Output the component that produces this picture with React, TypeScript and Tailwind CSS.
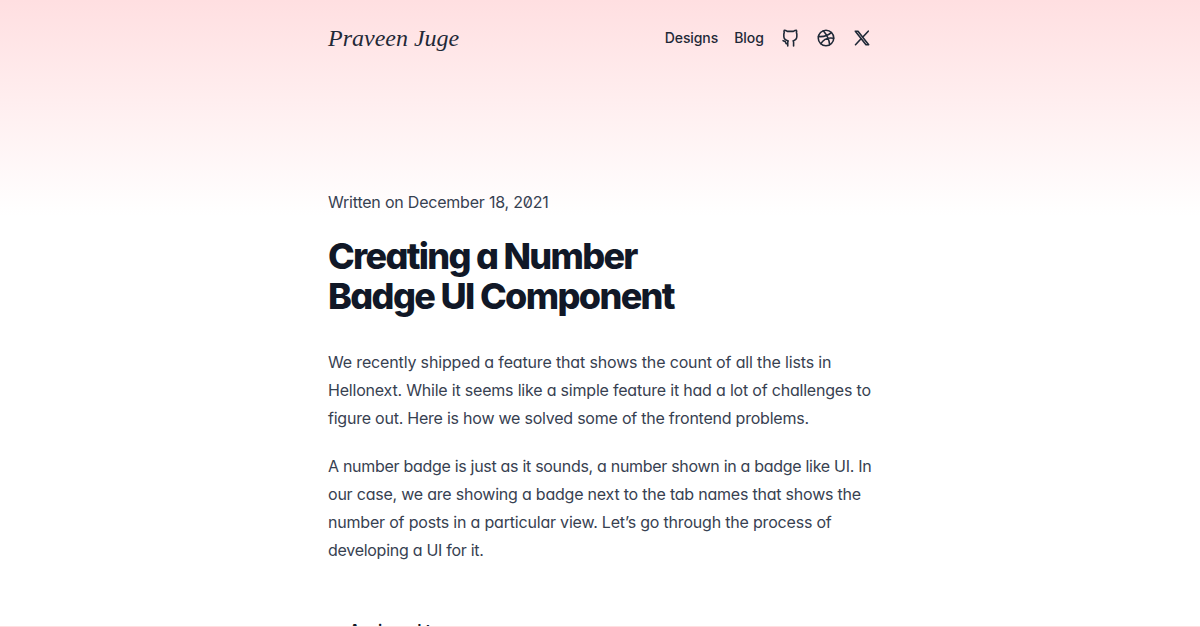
const intro = [
  { text: "We recently shipped a feature that shows the count of all the lists in", track: "tracking-[-0.155px]" },
  { text: "Hellonext. While it seems like a simple feature it had a lot of challenges to", track: "tracking-[-0.2px]" },
  { text: "figure out. Here is how we solved some of the frontend problems.", track: "tracking-[-0.23px]" },
];
const detail = [
  { text: "A number badge is just as it sounds, a number shown in a badge like UI. In", track: "tracking-[-0.3px]" },
  { text: "our case, we are showing a badge next to the tab names that shows the", track: "tracking-[-0.215px]" },
  { text: "number of posts in a particular view. Let’s go through the process of", track: "tracking-[-0.195px]" },
  { text: "developing a UI for it.", track: "tracking-[-0.28px]" },
];

function Paragraph({ lines }: { lines: { text: string; track: string }[] }) {
  return (
    <p className="text-base leading-7 text-[#374151]">
      {lines.map((l) => (
        <span key={l.text} className={`block whitespace-nowrap ${l.track}`}>{l.text}</span>
      ))}
    </p>
  );
}

const iconProps = {
  viewBox: "0 0 24 24",
  fill: "none",
  stroke: "currentColor",
  strokeWidth: 1.9,
  strokeLinecap: "round" as const,
  strokeLinejoin: "round" as const,
  className: "size-5",
};

export default function App() {
  return (
    <div className="flex h-[627px] flex-col overflow-hidden border-b border-[#ffdfe1] bg-linear-to-b from-[#ffdfe1] to-white to-[216px] font-['Inter','Liberation_Sans',sans-serif] [font-feature-settings:'cv11','zero']">
      <div className="mx-auto w-[544px]">
        <header className="flex h-[76px] items-center justify-between text-[#1f2937]">
          <a className="whitespace-nowrap font-['Liberation_Serif',serif] text-[24px] leading-8 italic">Praveen Juge</a>
          <nav className="flex items-center gap-4 text-sm font-medium">
            <a className="tracking-[-0.1px]">Designs</a>
            <a>Blog</a>
            <svg {...iconProps}>
              <path d="M16.300 21.600V17.200c0-.8-.2-1.300-.6-1.700 3.200-1.100 4.500-2.400 4.500-5.300V7.300c0-.6-.2-1-.5-1.500.4-1 .4-2 0-3.200-1.500 0-2.600.6-3.700 1.400H8.800C7.700 3.200 6.600 2.600 5.100 2.600c-.4 1.200-.4 2.200 0 3.200-.3.500-.5.9-.5 1.500v2.900c0 2.900 1.300 4.200 5.300 5.300-.4.400-.6.900-.6 1.700v4.400M9.100 18.800H7.400L6.200 16.200L3.700 15.200" />
            </svg>
            <svg {...iconProps}>
              <circle cx="12" cy="12" r="9.300" />
              <path d="M8.800 3.400c5 6 7 10.500 7.600 16.500M5.800 18.800c3.300-5.300 8.300-7.800 15.300-6.500M2.900 10.200c6 .5 11.500-.8 15.500-4.600" />
            </svg>
            <svg {...iconProps}>
              <path d="M4 3.800h3.200l12.800 16.300h-3.200zM4.200 20.100l6.100-6.600M13.600 10.200l5.900-6.400" />
            </svg>
          </nav>
        </header>
        <main className="pt-[112px]">
          <p className="leading-7 text-[#374151]"><span className="whitespace-nowrap tracking-[-0.21px]">Written on December 18, 2021</span></p>
          <h1 className="mt-5 text-4xl leading-10 font-extrabold text-[#111827]">
            <span className="block whitespace-nowrap tracking-[-1.69px]">Creating a Number</span>
            <span className="block whitespace-nowrap tracking-[-1.64px]">Badge UI Component</span>
          </h1>
          <div className="mt-8 flex flex-col gap-5">
            <Paragraph lines={intro} />
            <Paragraph lines={detail} />
          </div>
          <p className="mt-[56px] pl-[21px] text-base leading-5 font-semibold whitespace-nowrap text-[#111827]">Assigned to</p>
        </main>
      </div>
    </div>
  );
}
